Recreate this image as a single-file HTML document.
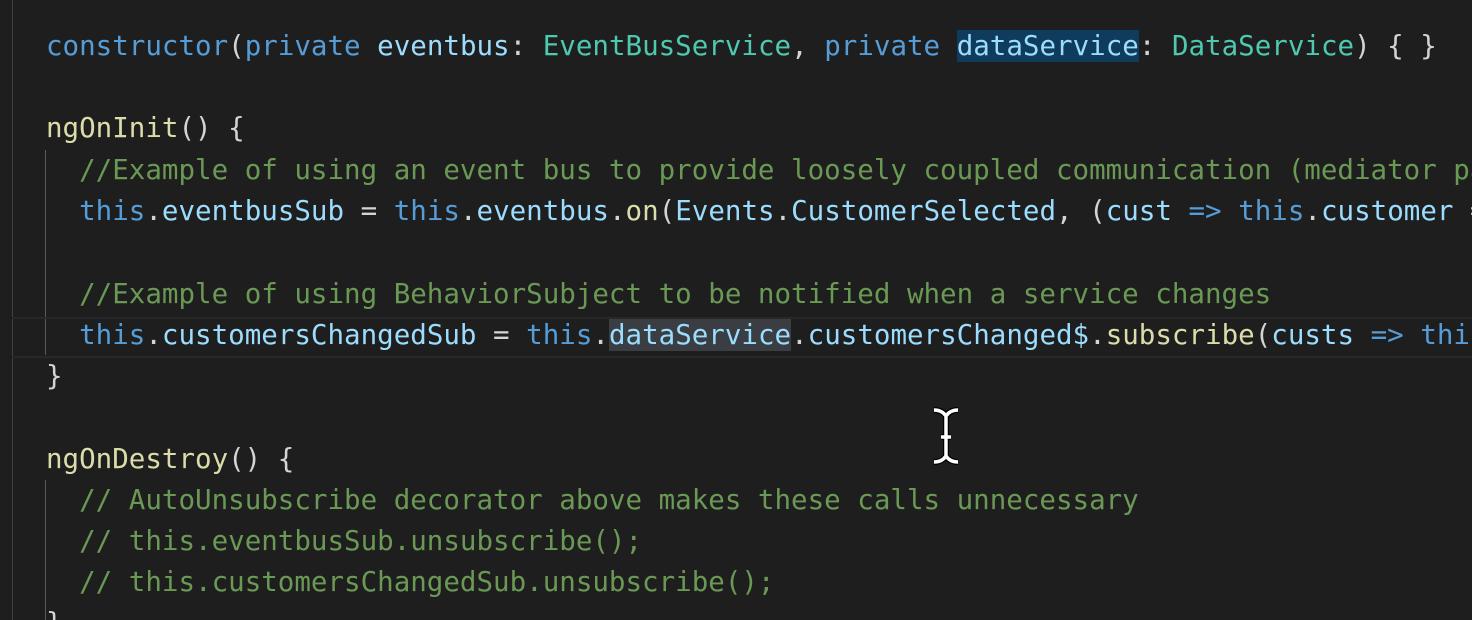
<!DOCTYPE html>
<html><head><meta charset="utf-8"><style>
html,body{margin:0;padding:0;background:#1e1e1e;width:1472px;height:620px;overflow:hidden}
.ed{position:relative;width:1472px;height:620px;overflow:hidden;font-family:"DejaVu Sans Mono","Liberation Mono",monospace;font-size:27.5px;color:#d4d4d4}
.l{position:absolute;left:46px;white-space:pre;line-height:41px;height:41px}
.k{color:#569cd6}.v{color:#9cdcfe}.t{color:#4ec9b0}.f{color:#dcdcaa}.c{color:#6a9955}
.sel{background:#0f3b5c}
.hl{background:#3a3d41}
.g{position:absolute;width:1px;background:#404040}
.cur{position:absolute;left:12px;top:317px;width:1460px;height:37px;border-top:2px solid #282828;border-bottom:2px solid #282828}
</style></head><body><div class="ed">
<div class="g" style="left:12px;top:0;height:620px"></div>
<div class="g" style="left:45px;top:150px;height:205px;background:#5a5a5a"></div>
<div class="g" style="left:45px;top:480px;height:140px;background:#5a5a5a"></div>
<div class="cur"></div>
<div class="l" style="top:26px"><span class="k">constructor</span>(<span class="k">private</span> <span class="v">eventbus</span>: <span class="t">EventBusService</span>, <span class="k">private</span> <span class="v sel">dataService</span>: <span class="t">DataService</span>) { }</div>
<div class="l" style="top:108px"><span class="f">ngOnInit</span>() {</div>
<div class="l" style="top:150px">  <span class="c">//Example of using an event bus to provide loosely coupled communication (mediator pattern)</span></div>
<div class="l" style="top:191px">  <span class="k">this</span>.<span class="v">eventbusSub</span> = <span class="k">this</span>.<span class="v">eventbus</span>.<span class="f">on</span>(<span class="v">Events</span>.<span class="v">CustomerSelected</span>, (<span class="v">cust</span> <span class="k">=&gt;</span> <span class="k">this</span>.<span class="v">customer</span> = cust));</div>
<div class="l" style="top:274px">  <span class="c">//Example of using BehaviorSubject to be notified when a service changes</span></div>
<div class="l" style="top:315px">  <span class="k">this</span>.<span class="v">customersChangedSub</span> = <span class="k">this</span>.<span class="v hl">dataService</span>.<span class="v">customersChanged$</span>.<span class="f">subscribe</span>(<span class="v">custs</span> <span class="k">=&gt;</span> <span class="k">this</span>.customers = custs);</div>
<div class="l" style="top:356px">}</div>
<div class="l" style="top:439px"><span class="f">ngOnDestroy</span>() {</div>
<div class="l" style="top:480px">  <span class="c">// AutoUnsubscribe decorator above makes these calls unnecessary</span></div>
<div class="l" style="top:521px">  <span class="c">// this.eventbusSub.unsubscribe();</span></div>
<div class="l" style="top:562px">  <span class="c">// this.customersChangedSub.unsubscribe();</span></div>
<div class="l" style="top:603px">}</div>
<svg style="position:absolute;left:930px;top:405px" width="32" height="62" viewBox="0 0 32 62">
<path d="M4 5 Q12 5 16 11 Q20 5 28 5 M16 11 V52 M4 57 Q12 57 16 51 Q20 57 28 57 M11 32 H21" stroke="#000" stroke-width="6" fill="none"/>
<path d="M4 5 Q12 5 16 11 Q20 5 28 5 M16 11 V52 M4 57 Q12 57 16 51 Q20 57 28 57 M11 32 H21" stroke="#fff" stroke-width="3.5" fill="none"/>
</svg>
</div></body></html>
